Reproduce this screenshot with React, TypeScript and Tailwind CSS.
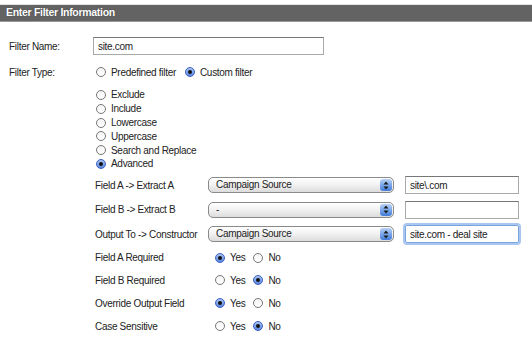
import React from 'react'

function Radio({ checked }: { checked?: boolean }) {
  if (checked) {
    return (
      <span className="inline-flex h-[10px] w-[10px] shrink-0 items-center justify-center rounded-full border border-[#3b5fc4] bg-gradient-to-b from-[#a9c4f2] to-[#5a86de]">
        <span className="h-[4px] w-[4px] rounded-full bg-[#111]" />
      </span>
    )
  }
  return <span className="inline-block h-[10px] w-[10px] shrink-0 rounded-full border border-[#777] bg-gradient-to-b from-[#f4f4f4] to-white" />
}

function Option({ checked, label }: { checked?: boolean; label: string }) {
  return (
    <span className="inline-flex items-center gap-[5px]">
      <Radio checked={checked} />
      <span>{label}</span>
    </span>
  )
}

function Select({ value }: { value: string }) {
  return (
    <div className="flex h-[16px] w-[186px] items-center justify-between rounded-[5px] border border-[#8a8a8a] bg-gradient-to-b from-white via-[#f1f1f1] to-[#dcdcdc] pl-[7px] pr-[1px]">
      <span className="leading-none">{value}</span>
      <span className="flex h-[12px] w-[12px] flex-col items-center justify-center rounded-[3px] bg-gradient-to-b from-[#b8d2f6] to-[#3f7bd9]">
        <svg width="6" height="9" viewBox="0 0 6 9">
          <path d="M3 0.5 L5.5 3.5 H0.5 Z" fill="#1a1a1a" />
          <path d="M3 8.5 L5.5 5.5 H0.5 Z" fill="#1a1a1a" />
        </svg>
      </span>
    </div>
  )
}

function TextBox({ value, focus }: { value?: string; focus?: boolean }) {
  return (
    <div
      className={
        focus
          ? 'flex h-[18px] w-[114px] items-center rounded-[2px] border border-[#7aa4de] pl-[4px] shadow-[0_0_0_2px_#a8c6ef]'
          : 'flex h-[18px] w-[114px] items-center border border-[#a9a9a9] border-t-[#777] pl-[4px]'
      }
    >
      {value}
    </div>
  )
}

const ops = ['Exclude', 'Include', 'Lowercase', 'Uppercase', 'Search and Replace', 'Advanced']

const fields = [
  { label: 'Field A -> Extract A', select: 'Campaign Source', text: 'site\\.com' },
  { label: 'Field B -> Extract B', select: '-', text: '' },
  { label: 'Output To -> Constructor', select: 'Campaign Source', text: 'site.com - deal site', focus: true },
]

const yesNo = [
  { label: 'Field A Required', yes: true },
  { label: 'Field B Required', yes: false },
  { label: 'Override Output Field', yes: true },
  { label: 'Case Sensitive', yes: false },
]

export default function App() {
  return (
    <div className="h-[343px] w-[532px] overflow-hidden whitespace-nowrap bg-white text-[10px] tracking-[-0.3px] text-[#222] font-['Liberation_Sans',Arial,sans-serif]">
      <div className="h-[5px] border-b border-[#e2e2e2]" />
      <div className="flex h-[17px] items-center border-b border-[#999] bg-[#636363] pl-[6px] text-[10.5px] font-bold tracking-[-0.3px] text-white [text-shadow:0_0_1px_#333]">
        Enter Filter Information
      </div>

      <div className="flex h-[40px] items-center pt-[8px]">
        <span className="w-[93px] pl-[9px]">Filter Name:</span>
        <div className="flex h-[18px] w-[231px] items-center border border-[#a9a9a9] border-t-[#777] pl-[4px]">site.com</div>
      </div>

      <div className="flex h-[20px] items-center">
        <span className="w-[96px] pl-[9px]">Filter Type:</span>
        <div className="flex items-center gap-[9px]">
          <Option label="Predefined filter" />
          <Option checked label="Custom filter" />
        </div>
      </div>

      <div className="flex flex-col pl-[96px] pt-[6px]">
        {ops.map((o) => (
          <div key={o} className="flex h-[13.8px] items-center">
            <Option checked={o === 'Advanced'} label={o} />
          </div>
        ))}
      </div>

      <div className="flex flex-col pl-[95px] pt-[2px]">
        {fields.map((f) => (
          <div key={f.label} className="flex h-[24.5px] items-center">
            <span className="w-[113px]">{f.label}</span>
            <Select value={f.select} />
            <span className="w-[11px]" />
            <TextBox value={f.text} focus={f.focus} />
          </div>
        ))}
      </div>

      <div className="flex flex-col pl-[95px]">
        {yesNo.map((r) => (
          <div key={r.label} className="flex h-[22.8px] items-center">
            <span className="w-[120px]">{r.label}</span>
            <div className="flex items-center gap-[8px]">
              <Option checked={r.yes} label="Yes" />
              <Option checked={!r.yes} label="No" />
            </div>
          </div>
        ))}
      </div>
    </div>
  )
}
